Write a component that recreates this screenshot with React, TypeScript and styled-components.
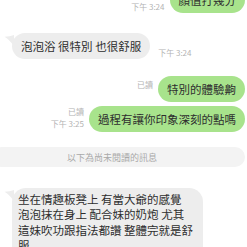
import React from "react";
import styled, { createGlobalStyle } from "styled-components";

const Global = createGlobalStyle`
  html, body { margin: 0; padding: 0; background: #ffffff; overflow: hidden; }
  body { font-family: "Noto Sans CJK TC", "Noto Sans", sans-serif; }
  #root { width: 247px; height: 247px; overflow: hidden; }
`;

const Chat = styled.div`
  display: flex;
  flex-direction: column;
  width: 247px;
  margin-top: -13px;
`;

const Row = styled.div<{ $side: "left" | "right"; $top: number }>`
  display: flex;
  flex-direction: ${(p) => (p.$side === "left" ? "row" : "row-reverse")};
  align-items: flex-end;
  margin-top: ${(p) => p.$top}px;
  padding: ${(p) => (p.$side === "left" ? "0 0 0 12px" : "0 2px 0 0")};
`;

const Bubble = styled.div<{ $tone: "green" | "gray" }>`
  position: relative;
  background: ${(p) => (p.$tone === "green" ? "#a8e38c" : "#ededed")};
  color: #2e2e2e;
  font-size: 11.5px;
  line-height: 15px;
  padding: 5.5px 9px;
  border-radius: 13px;
  white-space: nowrap;
`;

const LongBubble = styled(Bubble)`
  width: 191px;
  box-sizing: border-box;
  padding: 4px 8px 8px 6px;
  border-radius: 14px;
`;

const Line = styled.span`
  display: block;
  line-height: 15.3px;
`;

const Tail = styled.svg`
  position: absolute;
  left: -8px;
  top: 1px;
  width: 10px;
  height: 13px;
`;

const Meta = styled.div<{ $side: "left" | "right"; $bottom: number; $gap: number }>`
  display: flex;
  flex-direction: column;
  align-items: ${(p) => (p.$side === "left" ? "flex-start" : "flex-end")};
  margin: 0 ${(p) => p.$gap}px;
  padding-bottom: ${(p) => p.$bottom}px;
  font-size: 8px;
  line-height: 12px;
  color: #b3b3b3;
  white-space: nowrap;
`;

const Divider = styled.div`
  margin: 15px 2px 0 -8px;
  height: 20px;
  border-radius: 10px;
  background: #f3f3f3;
  display: flex;
  align-items: center;
  padding-left: 75px;
  font-size: 9px;
  color: #a9a9a9;
`;

const GrayTail = () => (
  <Tail viewBox="0 0 10 13">
    <path d="M10 1 Q6 2.5 0.5 2.8 Q5 5.5 10 12 Z" fill="#ededed" />
  </Tail>
);

export default function App() {
  return (
    <>
      <Global />
      <Chat>
        <Row $side="right" $top={0}>
          <Bubble $tone="green">顏值打幾分</Bubble>
          <Meta $side="right" $bottom={0} $gap={5}>
            <span>下午 3:24</span>
          </Meta>
        </Row>
        <Row $side="left" $top={20}>
          <Bubble $tone="gray">
            <GrayTail />
            泡泡浴 很特別 也很舒服
          </Bubble>
          <Meta $side="left" $bottom={0} $gap={8}>
            <span>下午 3:24</span>
          </Meta>
        </Row>
        <Row $side="right" $top={17}>
          <Bubble $tone="green">特別的體驗齁</Bubble>
          <Meta $side="right" $bottom={11} $gap={5}>
            <span>已讀</span>
          </Meta>
        </Row>
        <Row $side="right" $top={4}>
          <Bubble $tone="green">過程有讓你印象深刻的點嗎</Bubble>
          <Meta $side="right" $bottom={2} $gap={5}>
            <span>已讀</span>
            <span>下午 3:25</span>
          </Meta>
        </Row>
        <Divider>以下為尚未閱讀的訊息</Divider>
        <Row $side="left" $top={21}>
          <LongBubble $tone="gray">
            <GrayTail />
            <Line>坐在情趣板凳上 有當大爺的感覺</Line>
            <Line>泡泡抹在身上 配合妹的奶炮 尤其</Line>
            <Line>這妹吹功跟指法都讚 整體完就是舒</Line>
            <Line>服</Line>
          </LongBubble>
        </Row>
      </Chat>
    </>
  );
}
